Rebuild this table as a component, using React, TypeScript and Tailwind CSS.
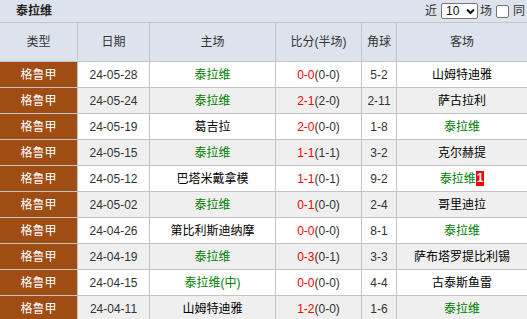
import React from "react";

type Row = {
  date: string;
  home: string;
  homeGreen?: boolean;
  ft: string;
  ht: string;
  corner: string;
  away: string;
  awayGreen?: boolean;
  card?: string;
};

const rows: Row[] = [
  { date: "24-05-28", home: "泰拉维", homeGreen: true, ft: "0-0", ht: "(0-0)", corner: "5-2", away: "山姆特迪雅" },
  { date: "24-05-24", home: "泰拉维", homeGreen: true, ft: "2-1", ht: "(2-0)", corner: "2-11", away: "萨古拉利" },
  { date: "24-05-19", home: "葛吉拉", ft: "2-0", ht: "(0-0)", corner: "1-8", away: "泰拉维", awayGreen: true },
  { date: "24-05-15", home: "泰拉维", homeGreen: true, ft: "1-1", ht: "(1-1)", corner: "3-2", away: "克尔赫提" },
  { date: "24-05-12", home: "巴塔米戴拿模", ft: "1-1", ht: "(0-1)", corner: "9-2", away: "泰拉维", awayGreen: true, card: "1" },
  { date: "24-05-02", home: "泰拉维", homeGreen: true, ft: "0-1", ht: "(0-0)", corner: "2-4", away: "哥里迪拉" },
  { date: "24-04-26", home: "第比利斯迪纳摩", ft: "0-0", ht: "(0-0)", corner: "8-1", away: "泰拉维", awayGreen: true },
  { date: "24-04-19", home: "泰拉维", homeGreen: true, ft: "0-3", ht: "(0-1)", corner: "3-3", away: "萨布塔罗提比利锡" },
  { date: "24-04-15", home: "泰拉维(中)", homeGreen: true, ft: "0-0", ht: "(0-0)", corner: "4-4", away: "古泰斯鱼雷" },
  { date: "24-04-11", home: "山姆特迪雅", ft: "1-2", ht: "(0-0)", corner: "1-6", away: "泰拉维", awayGreen: true },
];

// 列宽: 类型 / 日期 / 主场 / 比分 / 角球 / 客场
const cols = "grid grid-cols-[78px_72px_126px_86px_35px_130px]";
const cell = "flex items-center justify-center border-r border-b border-[#c4c4c4] whitespace-nowrap";

export default function App() {
  return (
    <div
      className="w-[527px] h-[319px] overflow-hidden bg-white text-[12px] text-[#333]"
      style={{ fontFamily: '"Liberation Sans", "Noto Sans CJK SC", sans-serif' }}
    >
      {/* 标题栏 */}
      <div className="h-[23px] bg-[#dce3ec] flex items-center border-b border-[#c4c4c4]">
        <span className="pl-[16px] font-bold text-[#222]">泰拉维</span>
        <div className="ml-auto flex items-center whitespace-nowrap w-[102px] shrink-0 overflow-hidden text-[#333]">
          <span>近</span>
          <div className="ml-[4px] w-[37px] h-[16px] bg-white border border-[#767676] rounded-[2px] flex items-center justify-between pl-[4px] pr-[2px] text-[#111]">
            <span>10</span>
            <svg width="9" height="7" viewBox="0 0 9 7">
              <path d="M1 1.5 L4.5 5 L8 1.5" stroke="#111" strokeWidth="2" fill="none" />
            </svg>
          </div>
          <span className="ml-[2px]">场</span>
          <span className="ml-[4px] w-[13px] h-[13px] border border-[#767676] rounded-[2px] bg-white shrink-0" />
          <span className="ml-[4px]">同</span>
        </div>
      </div>

      {/* 表头 */}
      <div className={`${cols} h-[39px] bg-[#dce3ec] text-[#333]`}>
        <div className={cell}>类型</div>
        <div className={cell}>日期</div>
        <div className={cell}>主场</div>
        <div className={cell}>比分(半场)</div>
        <div className={cell}>角球</div>
        <div className={`${cell} border-r-0`}>客场</div>
      </div>

      {rows.map((r, i) => (
        <div key={r.date} className={`${cols} h-[26px] ${i % 2 === 1 ? "bg-[#efefef]" : "bg-white"}`}>
          <div className={`${cell} bg-[#a04d14] text-white`}>格鲁甲</div>
          <div className={cell}>{r.date}</div>
          <div className={`${cell} ${r.homeGreen ? "text-[#008000]" : "text-black"}`}>{r.home}</div>
          <div className={cell}>
            <span className="text-[#ff0000]">{r.ft}</span>
            {r.ht}
          </div>
          <div className={cell}>{r.corner}</div>
          <div className={`${cell} border-r-0 ${r.awayGreen ? "text-[#008000]" : "text-black"}`}>
            {r.away}
            {r.card && (
              <span className="bg-[#ff0000] text-white px-[1px] leading-[15px] font-bold">{r.card}</span>
            )}
          </div>
        </div>
      ))}
    </div>
  );
}
